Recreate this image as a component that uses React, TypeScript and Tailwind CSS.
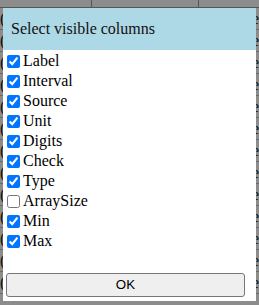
import React from "react";

const cols: { name: string; checked: boolean }[] = [
  { name: "Label", checked: true },
  { name: "Interval", checked: true },
  { name: "Source", checked: true },
  { name: "Unit", checked: true },
  { name: "Digits", checked: true },
  { name: "Check", checked: true },
  { name: "Type", checked: true },
  { name: "ArraySize", checked: false },
  { name: "Min", checked: true },
  { name: "Max", checked: true },
];

export default function App() {
  const rows = Array.from({ length: 13 });
  return (
    <div className="relative w-[259px] h-[305px] overflow-hidden bg-[#8c8c8c]" style={{ fontFamily: '"Liberation Serif", serif' }}>
      {/* background table */}
      <div className="flex flex-col">
        <div className="flex h-[8px] border-b border-[#555]">
          <div className="w-[92px] border-r border-[#555]"></div>
          <div className="w-[107px] border-r border-[#555]"></div>
          <div className="flex-1"></div>
        </div>
        {rows.map((_, i) => (
          <div key={i} className="flex h-[22px] border-b border-[#6a6a6a] text-[16px] leading-[22px] text-[#111]">
            <div className="w-[92px]">(</div>
            <div className="flex-1 text-right">e</div>
          </div>
        ))}
      </div>

      {/* dialog */}
      <div className="absolute left-[3px] top-[8px] w-[253px] h-[293px] bg-white flex flex-col">
        <div className="h-[42px] bg-[#add8e6] flex items-center pl-[8px] text-[16px] text-[#111]">
          Select visible columns
        </div>
        <div className="flex flex-col pt-[1px]">
          {cols.map((c) => (
            <label key={c.name} className="h-[20px] flex items-center text-[16px] text-black">
              <input type="checkbox" defaultChecked={c.checked} className="ml-[4px] mr-[3px] w-[13px] h-[13px]" />
              <span>{c.name}</span>
            </label>
          ))}
        </div>
        <div className="flex-1"></div>
        <div className="pl-[3px] pr-[11px] pb-[4px]">
          <button
            className="w-full h-[24px] bg-[#efefef] border border-[#767676] rounded-[3px] text-[13.33px] text-black"
            style={{ fontFamily: '"Liberation Sans", Arial, sans-serif' }}
          >
            OK
          </button>
        </div>
      </div>
    </div>
  );
}
